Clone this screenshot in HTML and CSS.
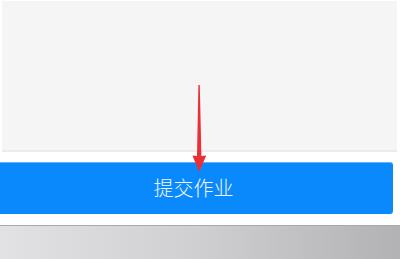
FILE: index.html
```html
<!DOCTYPE html>
<html>
<head>
    <title>提交作业</title>
    <link rel="stylesheet" href="styles.css">
</head>
<body>
    <div class="page">
        <div class="content"></div>
        <div class="footer">
            <button class="submit">提交作业</button>
        </div>
        <div class="taskbar"></div>

        <svg class="arrow" width="400" height="259" viewBox="0 0 400 259">
            <polygon points="198.4,84 199.8,84 201.4,155 206.2,154.5 199.2,171 192.4,154.5 197,155" fill="#ea2f36"/>
        </svg>
    </div>
</body>
</html>
```

FILE: styles.css
```css
body {
    margin: 0;
    background: #fff;
    font-family: "Noto Sans CJK SC", "Noto Sans", sans-serif;
    overflow: hidden;
}

.page {
    position: relative;
    width: 400px;
    height: 259px;
}

.content {
    height: 149px;
    margin: 1px 3px 0 2px;
    background: #f5f5f5;
    border-bottom: 2px solid #ebebeb;
}

.footer {
    padding: 10px 7px 11px 0;
}

.submit {
    display: block;
    width: 100%;
    height: 52px;
    border: none;
    border-top: 1px solid #5fb6ff;
    border-radius: 0 3px 3px 0;
    background: #0a89fc;
    color: #f4f9ff;
    font-family: "Noto Sans CJK SC", "Noto Sans", sans-serif;
    font-size: 20px;
    font-weight: 300;
    padding: 0 6px 3px 0;
}

.taskbar {
    height: 33px;
    border-top: 1px solid #a9a9a9;
    background: linear-gradient(to right, #e2e2e4, #cfcfd1 50%, #b2b2b4);
}

.arrow {
    position: absolute;
    left: 0;
    top: 0;
}
```
